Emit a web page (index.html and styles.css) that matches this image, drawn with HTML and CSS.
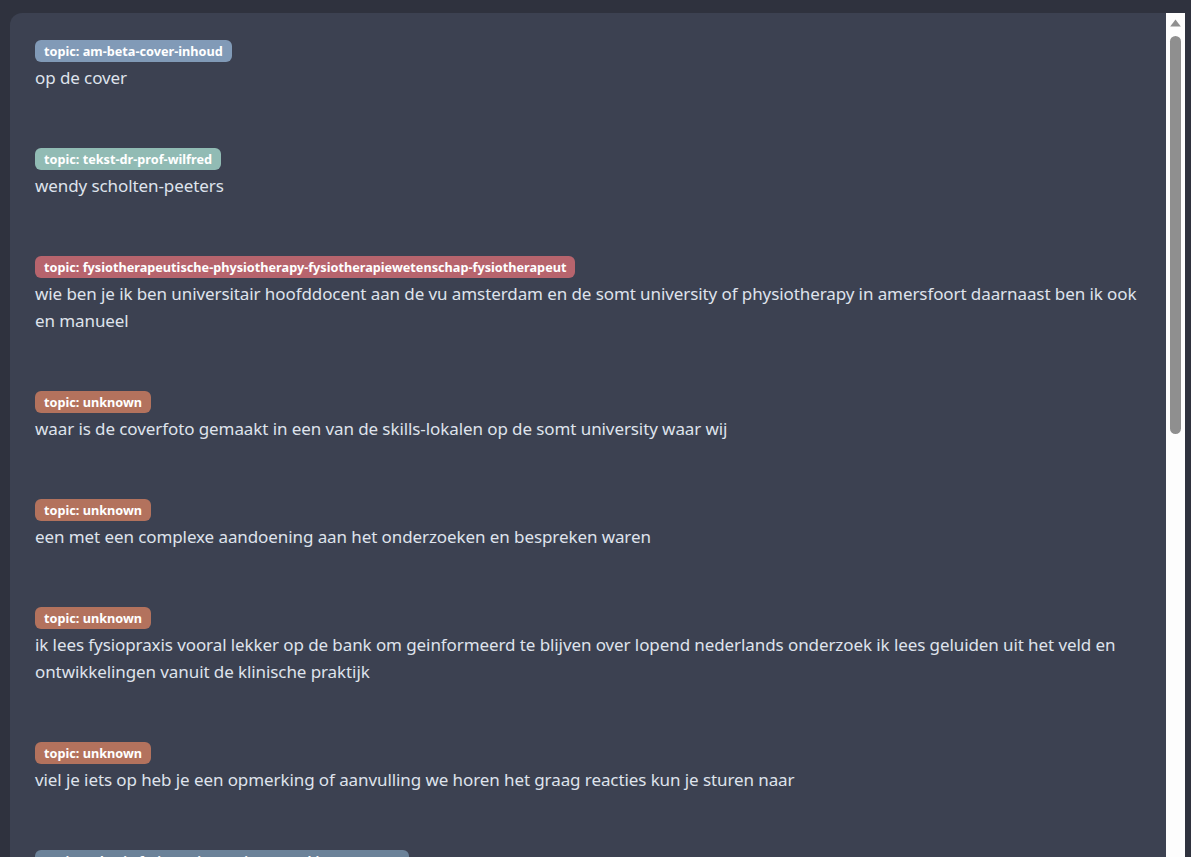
FILE: index.html
```html
<!DOCTYPE html>
<html lang="nl">
<head>
<meta charset="utf-8">
<title>Topics</title>
<link rel="stylesheet" href="styles.css">
</head>
<body>
<div class="wrap">
  <div class="panel">
    <main class="content">
      <section class="item">
        <span class="badge badge-blue">topic: am-beta-cover-inhoud</span>
        <p class="text">op de cover</p>
      </section>
      <section class="item">
        <span class="badge badge-teal">topic: tekst-dr-prof-wilfred</span>
        <p class="text">wendy scholten-peeters</p>
      </section>
      <section class="item">
        <span class="badge badge-red">topic: fysiotherapeutische-physiotherapy-fysiotherapiewetenschap-fysiotherapeut</span>
        <p class="text">wie ben je ik ben universitair hoofddocent aan de vu amsterdam en de somt university of physiotherapy in amersfoort daarnaast ben ik ook en manueel</p>
      </section>
      <section class="item">
        <span class="badge badge-orange">topic: unknown</span>
        <p class="text">waar is de coverfoto gemaakt in een van de skills-lokalen op de somt university waar wij</p>
      </section>
      <section class="item">
        <span class="badge badge-orange">topic: unknown</span>
        <p class="text">een met een complexe aandoening aan het onderzoeken en bespreken waren</p>
      </section>
      <section class="item">
        <span class="badge badge-orange">topic: unknown</span>
        <p class="text">ik lees fysiopraxis vooral lekker op de bank om geinformeerd te blijven over lopend nederlands onderzoek ik lees geluiden uit het veld en ontwikkelingen vanuit de klinische praktijk</p>
      </section>
      <section class="item">
        <span class="badge badge-orange">topic: unknown</span>
        <p class="text">viel je iets op heb je een opmerking of aanvulling we horen het graag reacties kun je sturen naar</p>
      </section>
      <section class="item">
        <span class="badge badge-slate">topic: redactie-fysiopraxis-reacties-opmerkingen-vragen</span>
        <p class="text">redactie fysiopraxis</p>
      </section>
    </main>
    <div class="scrollbar" aria-hidden="true">
      <svg class="scroll-arrow" width="11" height="8" viewBox="0 0 11 8"><path d="M5.5 0.5 L10.8 7.6 L0.2 7.6 Z" fill="#8f8f8f"/></svg>
      <div class="scroll-thumb"></div>
    </div>
  </div>
</div>
</body>
</html>
```
FILE: styles.css
```css
html, body {
  margin: 0;
  height: 100%;
  overflow: hidden;
  background: #2f323e;
}

body {
  font-family: "Segoe UI", "Noto Sans", sans-serif;
  color: #dfe3ec;
}

.wrap {
  padding: 13px 6px 0 10px;
}

.panel {
  display: flex;
  height: 900px;
  background: #3c4151;
  border-radius: 12px 0 0 12px;
}

.content {
  flex: 1;
  min-width: 0;
  padding: 27px 25px;
}

.item {
  display: flex;
  flex-direction: column;
  align-items: flex-start;
  gap: 2px;
  margin-bottom: 57px;
}

.badge {
  display: inline-block;
  height: 22px;
  line-height: 22px;
  padding: 0 9px;
  border-radius: 6px;
  font-size: 12.7px;
  font-weight: 700;
  color: #ffffff;
  white-space: nowrap;
}

.badge-blue { background: #819ab7; }
.badge-teal { background: #91bbb4; }
.badge-red { background: #b7646d; }
.badge-orange { background: #b3725d; }
.badge-slate { background: #6b8299; }

.text {
  margin: 0;
  font-size: 17px;
  line-height: 27px;
  letter-spacing: -0.09px;
}

.scrollbar {
  flex: 0 0 19px;
  display: flex;
  flex-direction: column;
  align-items: center;
  padding-top: 6px;
  background: #fdfdfd;
}

.scroll-arrow {
  display: block;
}

.scroll-thumb {
  margin-top: 9px;
  width: 11px;
  height: 398px;
  border-radius: 6px;
  background: #8f8f8f;
}
```
